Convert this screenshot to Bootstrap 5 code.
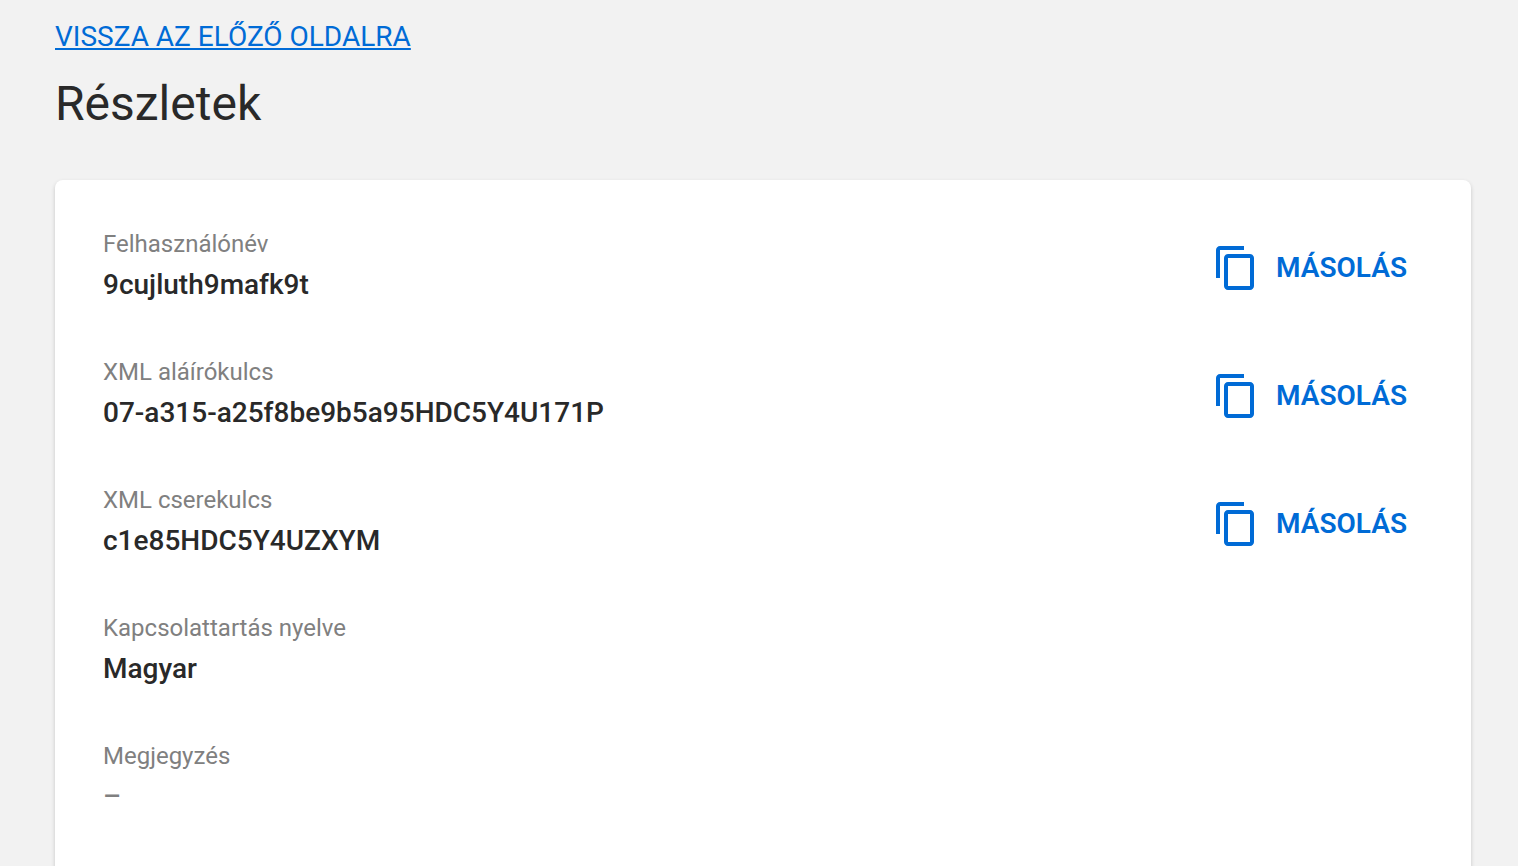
<!DOCTYPE html>
<html lang="hu">
<head>
<meta charset="utf-8">
<meta name="viewport" content="width=device-width, initial-scale=1">
<title>Részletek</title>
<link rel="stylesheet" href="https://cdn.jsdelivr.net/npm/bootstrap@5.3.0/dist/css/bootstrap.min.css">
<style>
body { background: #f2f2f2; color: #292929; font-family: Roboto, "Noto Sans", sans-serif; font-size: 28px; line-height: 40px; }
.page { padding: 17px 47px 0 55px; }
.back-link { color: #006bd6; text-decoration-thickness: 2px; text-underline-offset: 2px; }
.page-title { font-size: 48px; line-height: 64px; font-weight: 400; margin: 15px 0 44px; }
.details { border: 0; border-radius: 8px; box-shadow: 0 2px 4px rgba(0,0,0,.18); padding: 48px 48px 80px; color: inherit; }
.detail-list { gap: 46px; }
.detail-label { color: #808080; font-size: 24px; line-height: 32px; font-weight: 400; }
.detail-value { font-weight: 500; line-height: 50px; }
.detail-empty { color: #808080; }
.copy-btn { --bs-btn-color: #006bd6; --bs-btn-hover-color: #004c99; --bs-btn-padding-x: 16px; --bs-btn-padding-y: 0; --bs-btn-font-size: 28px; --bs-btn-line-height: 48px; --bs-btn-font-weight: 600; --bs-btn-border-width: 0; gap: 16px; margin-bottom: 2px; }
</style>
</head>
<body>
<svg class="d-none" xmlns="http://www.w3.org/2000/svg"><symbol id="copy" viewBox="0 0 24 24"><path fill="currentColor" d="M16 1H4c-1.100 0-2 .9-2 2v14h2V3h12V1zm3 4H8c-1.100 0-2 .9-2 2v14c0 1.100.9 2 2 2h11c1.100 0 2-.9 2-2V7c0-1.100-.9-2-2-2zm0 16H8V7h11v14z"/></symbol></svg>
<main class="page container-fluid">
<a class="back-link" href="#">VISSZA AZ ELŐZŐ OLDALRA</a>
<h1 class="page-title">Részletek</h1>
<section class="card details">
<dl class="detail-list d-flex flex-column mb-0">
<div class="d-flex justify-content-between align-items-center"><div><dt class="detail-label">Felhasználónév</dt><dd class="detail-value mb-0">9cujluth9mafk9t</dd></div><button type="button" class="btn copy-btn d-flex align-items-center"><svg width="48" height="48" aria-hidden="true"><use href="#copy"/></svg>MÁSOLÁS</button></div>
<div class="d-flex justify-content-between align-items-center"><div><dt class="detail-label">XML aláírókulcs</dt><dd class="detail-value mb-0">07-a315-a25f8be9b5a95HDC5Y4U171P</dd></div><button type="button" class="btn copy-btn d-flex align-items-center"><svg width="48" height="48" aria-hidden="true"><use href="#copy"/></svg>MÁSOLÁS</button></div>
<div class="d-flex justify-content-between align-items-center"><div><dt class="detail-label">XML cserekulcs</dt><dd class="detail-value mb-0">c1e85HDC5Y4UZXYM</dd></div><button type="button" class="btn copy-btn d-flex align-items-center"><svg width="48" height="48" aria-hidden="true"><use href="#copy"/></svg>MÁSOLÁS</button></div>
<div><dt class="detail-label">Kapcsolattartás nyelve</dt><dd class="detail-value mb-0">Magyar</dd></div>
<div><dt class="detail-label">Megjegyzés</dt><dd class="detail-value detail-empty mb-0">–</dd></div>
</dl>
</section>
</main>
<script src="https://cdn.jsdelivr.net/npm/bootstrap@5.3.0/dist/js/bootstrap.bundle.min.js"></script>
</body>
</html>
